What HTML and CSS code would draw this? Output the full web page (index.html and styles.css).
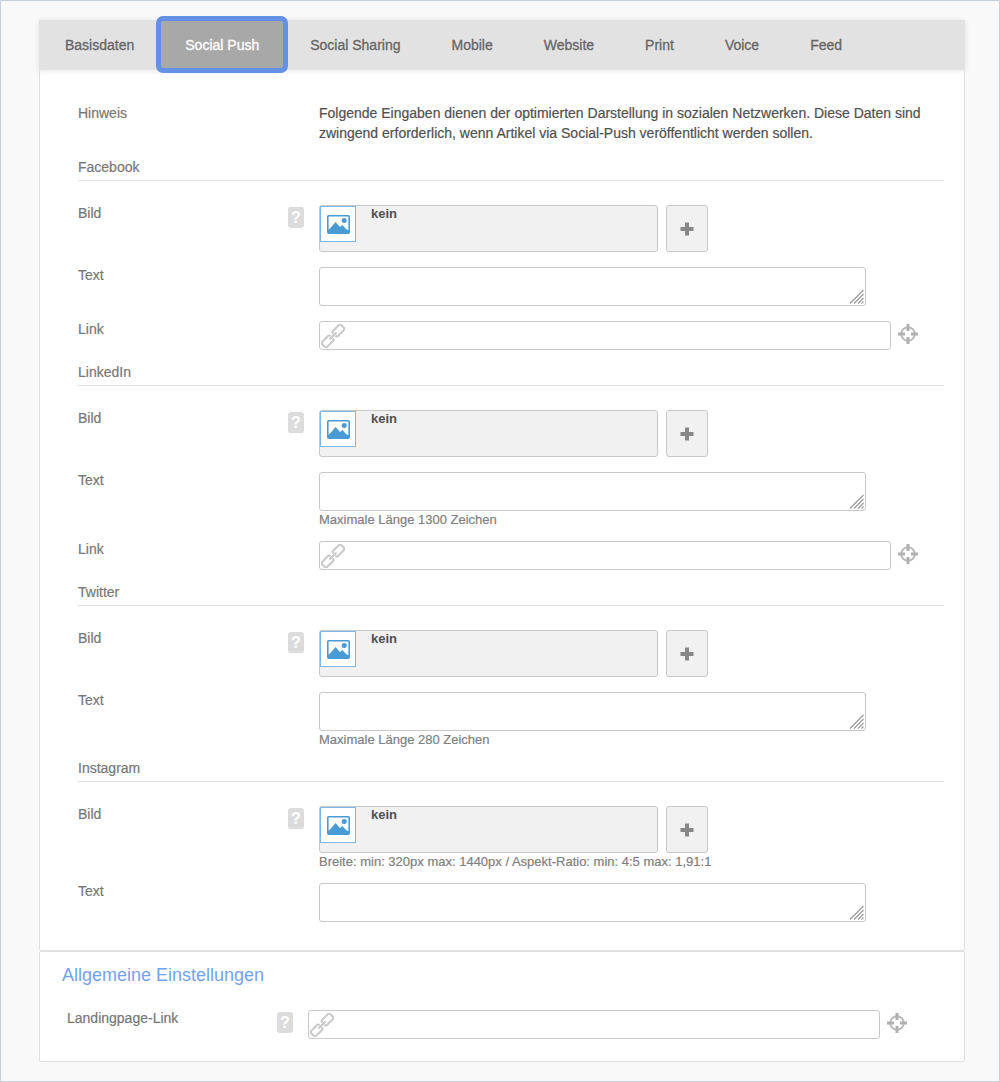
FILE: index.html
```html
<!DOCTYPE html>
<html lang="de">
<head>
  <meta charset="UTF-8" />
  <meta name="viewport" content="width=device-width, initial-scale=1.0"/>
  <title>Social Push</title>
  <link rel="stylesheet" href="styles.css">
</head>
<body>
  <svg class="sprite" aria-hidden="true">
    <symbol id="icon-image" viewBox="0 0 23 19">
      <rect x="0.8" y="0.8" width="21.4" height="17.4" rx="1" fill="#fff" stroke="#4a9ad4" stroke-width="1.6"/>
      <circle cx="17.200" cy="5.400" r="2.500" fill="#4a9ad4"/>
      <path d="M1 18v-3l2-1.500L8.500 7l4.500 5 2.500-2 3.500 4 3 1.500V18z" fill="#4a9ad4"/>
    </symbol>
    <symbol id="icon-link" viewBox="0 0 24 24">
      <g fill="none" stroke="#c8c8c8" stroke-width="2" stroke-linejoin="round" transform="rotate(-45 12 12)">
        <path d="M10 10.500V10Q10 8.500 8.500 8.500H0.500Q-1.500 8.500 -1.500 10.500v3q0 2 2 2H8.500q1.500 0 1.500-1.500V13.500"/>
        <path d="M14 10.500V10Q14 8.500 15.500 8.500h8q2 0 2 2v3q0 2-2 2h-8q-1.500 0-1.500-1.500V13.500"/>
        <path d="M7 12h10"/>
      </g>
    </symbol>
    <symbol id="icon-target" viewBox="0 0 20 20">
      <circle cx="10" cy="10" r="6.800" fill="none" stroke="#bbb" stroke-width="2"/>
      <path d="M10 0v7M10 13v7M0 10h7M13 10h7" stroke="#b0b0b0" stroke-width="3"/>
    </symbol>
    <symbol id="icon-plus" viewBox="0 0 14 14">
      <path d="M7 0.500v13M0.500 7h13" stroke="#888" stroke-width="4"/>
    </symbol>
    <symbol id="icon-grip" viewBox="0 0 15 15">
      <path d="M1 14.500L14.500 1M5 14.500L14.500 5M9 14.500L14.500 9M12.500 14.500l2-2" stroke="#999" stroke-width="1.200"/>
    </symbol>
  </svg>

  <main class="page">
    <nav class="tabs">
      <a href="#basisdaten" class="tab">Basisdaten</a>
      <a href="#social-push" class="tab active">Social Push</a>
      <a href="#social-sharing" class="tab">Social Sharing</a>
      <a href="#mobile" class="tab">Mobile</a>
      <a href="#website" class="tab">Website</a>
      <a href="#print" class="tab">Print</a>
      <a href="#voice" class="tab">Voice</a>
      <a href="#feed" class="tab">Feed</a>
    </nav>

    <form class="panel" id="social-push">
      <div class="row note">
        <span class="label">Hinweis</span>
        <p class="field">Folgende Eingaben dienen der optimierten Darstellung in sozialen Netzwerken. Diese Daten sind zwingend erforderlich, wenn Artikel via Social-Push veröffentlicht werden sollen.</p>
      </div>

      <section>
        <h2>Facebook</h2>
        <div class="row">
          <label class="label" for="fb-image">Bild</label>
          <button type="button" class="help" aria-label="Hilfe">?</button>
          <div class="field media">
            <div class="media-box">
              <span class="thumb"><svg><use href="#icon-image"/></svg></span>
              <strong>kein</strong>
            </div>
            <button type="button" class="add" id="fb-image"><svg><use href="#icon-plus"/></svg></button>
          </div>
        </div>
        <div class="row">
          <label class="label" for="fb-text">Text</label>
          <div class="field text">
            <textarea id="fb-text"></textarea>
            <svg class="grip"><use href="#icon-grip"/></svg>
          </div>
        </div>
        <div class="row">
          <label class="label" for="fb-link">Link</label>
          <div class="field link">
            <div class="link-box">
              <svg><use href="#icon-link"/></svg>
              <input type="text" id="fb-link">
            </div>
            <button type="button" class="target" aria-label="Ziel"><svg><use href="#icon-target"/></svg></button>
          </div>
        </div>
      </section>

      <section>
        <h2>LinkedIn</h2>
        <div class="row">
          <label class="label" for="li-image">Bild</label>
          <button type="button" class="help" aria-label="Hilfe">?</button>
          <div class="field media">
            <div class="media-box">
              <span class="thumb"><svg><use href="#icon-image"/></svg></span>
              <strong>kein</strong>
            </div>
            <button type="button" class="add" id="li-image"><svg><use href="#icon-plus"/></svg></button>
          </div>
        </div>
        <div class="row">
          <label class="label" for="li-text">Text</label>
          <div class="field text">
            <textarea id="li-text"></textarea>
            <svg class="grip"><use href="#icon-grip"/></svg>
          </div>
          <p class="hint">Maximale Länge 1300 Zeichen</p>
        </div>
        <div class="row">
          <label class="label" for="li-link">Link</label>
          <div class="field link">
            <div class="link-box">
              <svg><use href="#icon-link"/></svg>
              <input type="text" id="li-link">
            </div>
            <button type="button" class="target" aria-label="Ziel"><svg><use href="#icon-target"/></svg></button>
          </div>
        </div>
      </section>

      <section>
        <h2>Twitter</h2>
        <div class="row">
          <label class="label" for="tw-image">Bild</label>
          <button type="button" class="help" aria-label="Hilfe">?</button>
          <div class="field media">
            <div class="media-box">
              <span class="thumb"><svg><use href="#icon-image"/></svg></span>
              <strong>kein</strong>
            </div>
            <button type="button" class="add" id="tw-image"><svg><use href="#icon-plus"/></svg></button>
          </div>
        </div>
        <div class="row">
          <label class="label" for="tw-text">Text</label>
          <div class="field text">
            <textarea id="tw-text"></textarea>
            <svg class="grip"><use href="#icon-grip"/></svg>
          </div>
          <p class="hint">Maximale Länge 280 Zeichen</p>
        </div>
      </section>

      <section>
        <h2>Instagram</h2>
        <div class="row">
          <label class="label" for="ig-image">Bild</label>
          <button type="button" class="help" aria-label="Hilfe">?</button>
          <div class="field media">
            <div class="media-box">
              <span class="thumb"><svg><use href="#icon-image"/></svg></span>
              <strong>kein</strong>
            </div>
            <button type="button" class="add" id="ig-image"><svg><use href="#icon-plus"/></svg></button>
          </div>
          <p class="hint">Breite: min: 320px max: 1440px / Aspekt-Ratio: min: 4:5 max: 1,91:1</p>
        </div>
        <div class="row">
          <label class="label" for="ig-text">Text</label>
          <div class="field text">
            <textarea id="ig-text"></textarea>
            <svg class="grip"><use href="#icon-grip"/></svg>
          </div>
        </div>
      </section>
    </form>

    <form class="panel general">
      <h1>Allgemeine Einstellungen</h1>
      <div class="row">
        <label class="label" for="landing-link">Landingpage-Link</label>
        <button type="button" class="help" aria-label="Hilfe">?</button>
        <div class="field link">
          <div class="link-box">
            <svg><use href="#icon-link"/></svg>
            <input type="text" id="landing-link">
          </div>
          <button type="button" class="target" aria-label="Ziel"><svg><use href="#icon-target"/></svg></button>
        </div>
      </div>
    </form>
  </main>
</body>
</html>
```

FILE: styles.css
```css
* {
  box-sizing: border-box;
  margin: 0;
  padding: 0;
}

:root {
  --border-color: #c8c8c8;
  --line-color: #e0e0e0;
  --label-color: #777;
  --text-color: #505050;
  --accent-color: #6491e6;
}

body {
  min-height: 100vh;
  padding: 19px 34px 19px 38px;
  border: 1px solid #c5d0d8;
  background-color: #f9f9f9;
  color: var(--text-color);
  font-family: "Liberation Sans", Arial, sans-serif;
  font-size: 14px;
}

button,
input,
textarea {
  font: inherit;
}

svg {
  display: block;
}

.sprite {
  position: absolute;
  width: 0;
  height: 0;
}

.tabs {
  position: relative;
  display: flex;
  gap: 1px;
  padding-left: 1px;
  background-color: #e2e2e2;
  box-shadow: 0 1px 6px rgba(0, 0, 0, 0.1);
}

.tab {
  padding: 0 25px;
  color: #666;
  line-height: 50px;
  text-decoration: none;
  -webkit-text-stroke: 0.3px;
}

.tab.active {
  position: relative;
  background-color: #a8a8a8;
  color: #fff;
}

.tab.active::after {
  content: "";
  position: absolute;
  inset: -4px -4px -3px;
  border: 5px solid var(--accent-color);
  border-radius: 7px;
}

.panel {
  padding: 33px 20px 13px 38px;
  border: 1px solid var(--line-color);
  border-top: none;
  border-radius: 2px;
  background-color: #fff;
}

.row {
  display: grid;
  grid-template-columns: 210px 31px minmax(0, 1fr);
  margin-bottom: 15px;
}

.label {
  color: var(--label-color);
  line-height: 16px;
  -webkit-text-stroke: 0.2px;
}

.field,
.hint {
  grid-column: 3;
}

.note {
  margin-bottom: 17px;
  line-height: 20px;
}

.note .label {
  line-height: 20px;
}

.note .field {
  -webkit-text-stroke: 0.2px;
}

h2 {
  margin-bottom: 24px;
  padding-bottom: 6px;
  border-bottom: 1px solid var(--line-color);
  color: var(--label-color);
  font-size: 14px;
  font-weight: normal;
  line-height: 14px;
  -webkit-text-stroke: 0.2px;
}

.help {
  width: 16px;
  height: 21px;
  margin-top: 2px;
  border: none;
  border-radius: 3px;
  background-color: #dcdcdc;
  color: #fff;
  font-size: 16px;
  font-weight: bold;
  line-height: 21px;
}

.media {
  display: flex;
  gap: 8px;
  height: 47px;
}

.media-box {
  display: flex;
  flex: 0 1 339px;
  gap: 15px;
  border: 1px solid var(--border-color);
  border-radius: 3px;
  background-color: #f1f1f1;
  font-size: 13px;
  line-height: 16px;
}

.thumb {
  display: grid;
  place-items: center;
  width: 36px;
  height: 36px;
  border: 1px solid #7ab8e6;
  background-color: #fff;
}

.thumb svg {
  width: 23px;
  height: 19px;
}

.add {
  display: grid;
  place-items: center;
  width: 42px;
  border: 1px solid var(--border-color);
  border-radius: 3px;
  background-color: #f1f1f1;
}

.add svg {
  width: 14px;
  height: 14px;
}

.text {
  position: relative;
  margin-right: 78px;
}

.text textarea {
  display: block;
  width: 100%;
  height: 39px;
  padding: 4px;
  border: 1px solid var(--border-color);
  border-radius: 3px;
  resize: none;
}

.grip {
  position: absolute;
  right: 2px;
  bottom: 2px;
  width: 15px;
  height: 15px;
}

.link {
  display: flex;
  align-items: flex-start;
  gap: 7px;
  padding-right: 26px;
}

.link-box {
  display: flex;
  flex: 1;
  align-items: center;
  height: 29px;
  padding: 0 1px;
  border: 1px solid var(--border-color);
  border-radius: 3px;
  background-color: #fff;
}

.link-box svg {
  width: 24px;
  height: 24px;
}

.link-box input {
  flex: 1;
  border: none;
  outline: none;
}

.target {
  padding-top: 3px;
  border: none;
  background: none;
}

.target svg {
  width: 20px;
  height: 20px;
}

.hint {
  height: 15px;
  padding-top: 1px;
  color: #808080;
  font-size: 13px;
  line-height: 15px;
  -webkit-text-stroke: 0.2px;
}

.general {
  padding: 13px 31px 7px 27px;
  border-top: 1px solid var(--line-color);
}

.general h1 {
  margin: 0 0 25px -5px;
  color: #74a2ec;
  font-size: 18px;
  font-weight: normal;
  line-height: 20px;
}
```
